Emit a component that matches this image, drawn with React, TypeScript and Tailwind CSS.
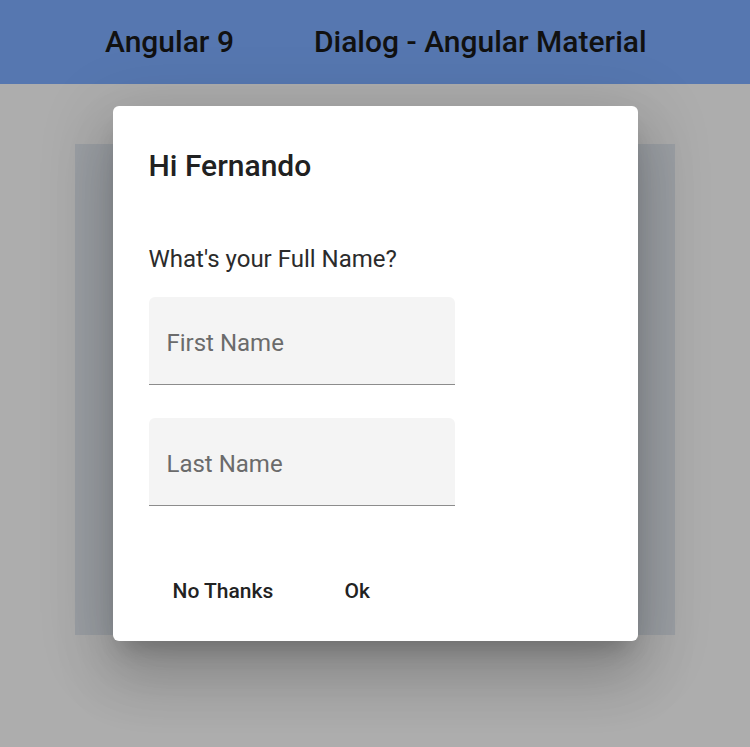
import { useState } from 'react';

function NameField({ placeholder }: { placeholder: string }) {
    const [value, setValue] = useState('');
    return (
        <div className="w-[306px] h-[88px] bg-[#f4f4f4] rounded-t-[6px] border-b border-[#8c8c8c] flex items-center px-[18px] pt-[4px]">
            <input
                value={value}
                onChange={e => setValue(e.target.value)}
                placeholder={placeholder}
                className="w-full bg-transparent outline-none text-[24px] text-[#222] placeholder:text-[#6b6b6b]"
            />
        </div>
    );
}

export default function App() {
    return (
        <div className="relative w-full h-[747px] bg-[#adadad] overflow-hidden font-['Roboto',sans-serif]">
            <header className="h-[84px] bg-[#5677b0] flex items-center pl-[105px] pb-[2px] gap-[80px] text-[30px] font-medium text-[#111]">
                <span>Angular 9</span>
                <span>Dialog - Angular Material</span>
            </header>

            <div className="mx-[75px] mt-[60px] h-[491px] bg-[#9ca0a5]" />

            <div className="absolute inset-0 flex items-center justify-center">
                <div
                    role="dialog"
                    aria-labelledby="dialog-title"
                    className="w-[525px] h-[535px] bg-white rounded-[6px] pt-[36px] px-[36px] pb-[22px] flex flex-col shadow-[0_16px_22px_-10px_rgba(0,0,0,0.2),0_36px_57px_4px_rgba(0,0,0,0.14),0_14px_69px_12px_rgba(0,0,0,0.12)]"
                >
                    <h2 id="dialog-title" className="text-[30px] leading-[48px] font-medium text-[#212121]">
                        Hi Fernando
                    </h2>

                    <p className="mt-[54px] text-[24px] leading-[30px] text-[#2b2b2b]">What's your Full Name?</p>

                    <div className="mt-[23px] flex flex-col gap-[33px]">
                        <NameField placeholder="First Name" />
                        <NameField placeholder="Last Name" />
                    </div>

                    <div className="mt-[59px] flex items-center gap-[12px]">
                        <button className="h-[54px] px-[24px] min-w-[96px] text-[21px] font-medium text-[#222] rounded-[6px]">
                            No Thanks
                        </button>
                        <button className="h-[54px] px-[24px] min-w-[96px] text-[21px] font-medium text-[#222] rounded-[6px]">
                            Ok
                        </button>
                    </div>
                </div>
            </div>
        </div>
    );
}
